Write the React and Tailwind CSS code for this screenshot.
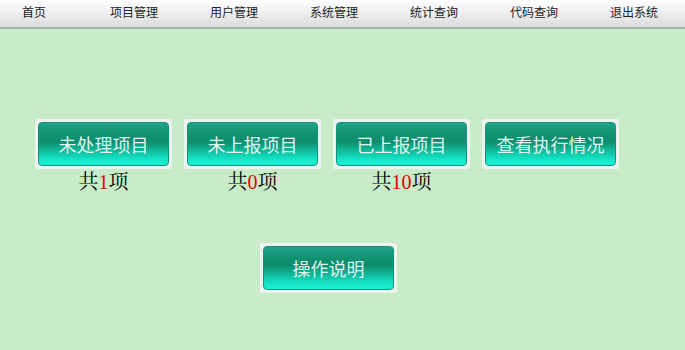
import React from 'react';

const navItems = ['首页', '项目管理', '用户管理', '系统管理', '统计查询', '代码查询', '退出系统'];

const cards = [
  { label: '未处理项目', count: '1' },
  { label: '未上报项目', count: '0' },
  { label: '已上报项目', count: '10' },
  { label: '查看执行情况', count: null },
];

const GlossButton = ({ children }) => (
  <div className="w-[137px] h-[50px] p-[3px] bg-[#eef3ef] rounded-[2px]">
    <button className="w-full h-full rounded-[4px] border border-[#109578] bg-[linear-gradient(to_bottom,#1fa486_0%,#10906f_30%,#0c8f6f_45%,#10b899_65%,#14e2c4_85%,#1af2d6_100%)] text-[18px] text-[#dff5ef] flex items-center justify-center font-['Noto_Sans_CJK_SC',sans-serif]">
      {children}
    </button>
  </div>
);

const App = () => {
  return (
    <div className="w-[685px] h-[350px] bg-[#c8ebc8] overflow-hidden">
      {/* Top nav */}
      <div className="h-[29px] bg-[linear-gradient(to_bottom,#ffffff,#dcdcdc)] border-b-2 border-[#a9b3a9]">
        <div className="flex -ml-4 h-full items-center text-[12px] text-[#222] font-['Noto_Sans_CJK_SC',sans-serif]">
          {navItems.map((item) => (
            <div key={item} className="w-[100px] text-center leading-none -mt-[4px]">
              {item}
            </div>
          ))}
        </div>
      </div>

      {/* Cards */}
      <div className="flex gap-[12px] pl-[35px] mt-[90px]">
        {cards.map((c) => (
          <div key={c.label} className="flex flex-col items-center">
            <GlossButton>{c.label}</GlossButton>
            {c.count !== null && (
              <div className="text-[20px] leading-[24px] text-black font-['Noto_Serif_CJK_SC','Noto_Sans_CJK_SC',serif]">
                共<span className="text-[#e00000] font-['Liberation_Serif',serif]">{c.count}</span>项
              </div>
            )}
          </div>
        ))}
      </div>

      <div className="pl-[260px] mt-[49px]">
        <GlossButton>操作说明</GlossButton>
      </div>
    </div>
  );
};

export default App;
